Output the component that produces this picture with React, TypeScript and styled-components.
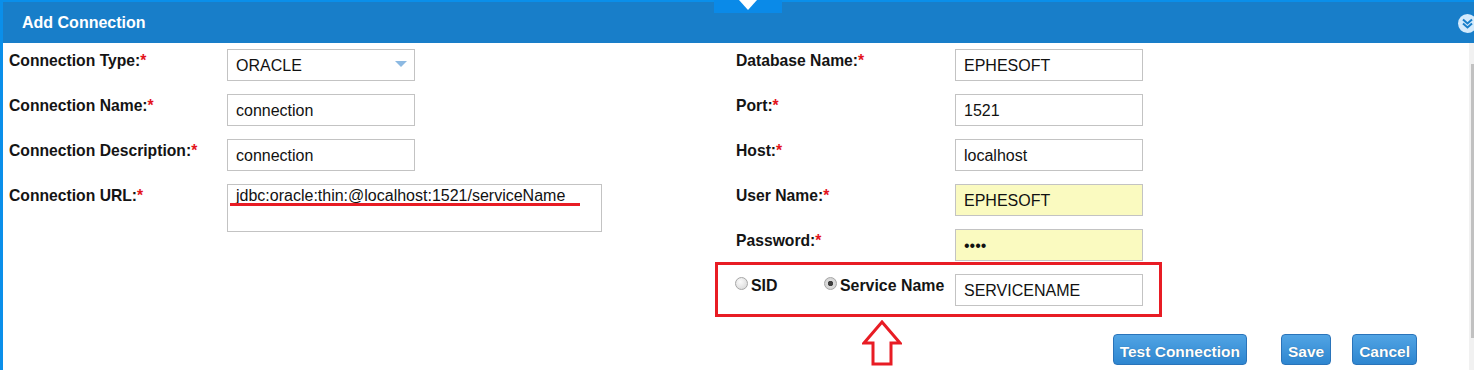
import React from 'react';
import styled, { createGlobalStyle } from 'styled-components';

const GlobalStyle = createGlobalStyle`
  html, body {
    margin: 0;
    padding: 0;
    background: #fff;
  }
  body {
    width: 1474px;
    height: 370px;
    overflow: hidden;
    font-family: "Liberation Sans", Arial, sans-serif;
  }
`;

const Frame = styled.div`
  width: 1474px;
  height: 370px;
  box-sizing: border-box;
  border-left: 3px solid #0a8fea;
  display: flex;
  flex-direction: column;
  overflow: hidden;
`;

const Header = styled.div`
  position: relative;
  flex: none;
  height: 43px;
  box-sizing: border-box;
  border-top: 2px solid #0a8fea;
  background: #187ec9;
  display: flex;
  align-items: center;
  justify-content: space-between;
  padding-left: 19px;
`;

const Title = styled.div`
  color: #fff;
  font-size: 16px;
  font-weight: bold;
`;

const Handle = styled.div`
  position: absolute;
  top: -2px;
  left: 711px;
  width: 68px;
  height: 13px;
  background: #0a8ae8;

  &::after {
    content: '';
    position: absolute;
    left: 25px;
    top: 0;
    border-left: 9.5px solid transparent;
    border-right: 9.5px solid transparent;
    border-top: 10px solid #fff;
  }
`;

const CollapseIcon = styled.svg`
  flex: none;
  margin-right: -3px;
  margin-top: 2px;
`;

const Main = styled.div`
  flex: 1;
  display: flex;
  min-height: 0;
`;

const Content = styled.div`
  flex: 1;
  padding: 6px 0 0 6px;
`;

const Scrollbar = styled.div`
  flex: none;
  width: 5px;
  background: #f1f1f1;
  padding-top: 21px;
  box-sizing: border-box;
`;

const Thumb = styled.div`
  margin-left: 2px;
  width: 3px;
  height: 274px;
  background: #c1c1c1;
`;

const Columns = styled.div`
  display: flex;
  align-items: flex-start;
`;

const Column = styled.div<{ $width: number }>`
  width: ${(p) => p.$width}px;
  display: flex;
  flex-direction: column;
  gap: 13px;
`;

const Row = styled.div`
  display: flex;
  align-items: flex-start;
`;

const Label = styled.label<{ $width: number }>`
  flex: none;
  width: ${(p) => p.$width}px;
  padding-top: 3px;
  font-size: 15.7px;
  line-height: 18px;
  font-weight: bold;
  color: #141414;
`;

const Req = styled.span`
  color: #e3141c;
`;

const TextInput = styled.input<{ $filled?: boolean }>`
  width: 188px;
  height: 32px;
  box-sizing: border-box;
  margin: 0;
  padding: 1px 8px 0;
  border: 1px solid #c3c3c3;
  background: ${(p) => (p.$filled ? '#fafac0' : '#fff')};
  font-family: "Liberation Sans", Arial, sans-serif;
  font-size: 16px;
  color: #111;
  outline: none;
`;

const SelectWrap = styled.div`
  position: relative;
  width: 188px;
  height: 32px;

  &::after {
    content: '';
    position: absolute;
    left: 168px;
    top: 12px;
    border-left: 6px solid transparent;
    border-right: 6px solid transparent;
    border-top: 6px solid #8cb9e2;
    pointer-events: none;
  }
`;

const Select = styled.select`
  appearance: none;
  width: 100%;
  height: 100%;
  box-sizing: border-box;
  margin: 0;
  padding: 1px 8px 0;
  border: 1px solid #c3c3c3;
  border-radius: 0;
  background: #fff;
  font-family: "Liberation Sans", Arial, sans-serif;
  font-size: 16px;
  color: #111;
  outline: none;
`;

const AreaWrap = styled.div`
  position: relative;
`;

const TextArea = styled.textarea`
  display: block;
  width: 375px;
  height: 48px;
  box-sizing: border-box;
  margin: 0;
  padding: 2px 8px;
  border: 1px solid #c3c3c3;
  resize: none;
  overflow: hidden;
  font-family: "Liberation Sans", Arial, sans-serif;
  font-size: 16px;
  line-height: 18px;
  color: #111;
  outline: none;
`;

const Underline = styled.div`
  position: absolute;
  left: 3px;
  top: 19px;
  width: 350px;
  height: 3px;
  background: #e81c24;
`;

const Highlight = styled.div`
  position: relative;
  display: flex;
  align-items: flex-start;
  margin: -12px -19px 0 -21px;
  padding: 9px 16px 8px 18px;
  border: 3px solid #e81c24;
`;

const RadioGroup = styled.div`
  flex: none;
  width: 219px;
  display: grid;
  grid-template-columns: 89px auto;
`;

const Option = styled.label`
  padding-top: 3px;
  font-size: 15.9px;
  line-height: 18px;
  font-weight: bold;
  color: #141414;
  white-space: nowrap;
`;

const Radio = styled.input.attrs({ type: 'radio' })`
  appearance: none;
  width: 13px;
  height: 13px;
  box-sizing: border-box;
  margin: 0 3px 0 -1px;
  border-radius: 50%;
  border: 1px solid #a6a6a6;
  background: radial-gradient(circle at 40% 35%, #fbfbfb, #d4d4d4);
  vertical-align: 1px;

  &:checked {
    background: radial-gradient(circle, #3f3f3f 0 2.4px, #dcdcdc 3px, #cdcdcd 100%);
  }
`;

const Arrow = styled.svg`
  position: absolute;
  left: 144px;
  top: 55px;
`;

const Footer = styled.div`
  display: flex;
  justify-content: flex-end;
  margin-top: 17px;
  padding-right: 52px;
`;

const Button = styled.button<{ $space?: number }>`
  height: 31px;
  box-sizing: border-box;
  margin: 0 0 0 ${(p) => p.$space ?? 0}px;
  padding: 3px 6px 0;
  border: 1px solid #2a74ba;
  border-radius: 4px;
  background: linear-gradient(#51a4e4, #2e86d0);
  color: #fff;
  font-family: "Liberation Sans", Arial, sans-serif;
  font-size: 15.5px;
  font-weight: bold;
  line-height: 27px;
  text-shadow: 0 0 1px rgba(0, 0, 0, 0.35);
  cursor: pointer;
`;

const Field = ({
  label,
  width,
  children,
}: {
  label: string;
  width: number;
  children: React.ReactNode;
}) => (
  <Row>
    <Label $width={width}>
      {label}
      <Req>*</Req>
    </Label>
    {children}
  </Row>
);

export default function App() {
  return (
    <>
      <GlobalStyle />
      <Frame>
        <Header>
          <Title>Add Connection</Title>
          <Handle />
          <CollapseIcon width="19" height="19" viewBox="0 0 19 19">
            <circle cx="9.5" cy="9.5" r="9.5" fill="#d3eafc" />
            <polyline points="5,5.5 9.5,9.5 14,5.5" fill="none" stroke="#187ec9" strokeWidth="2" />
            <polyline points="5,9.5 9.5,13.5 14,9.5" fill="none" stroke="#187ec9" strokeWidth="2" />
          </CollapseIcon>
        </Header>
        <Main>
          <Content>
            <Columns>
              <Column $width={727}>
                <Field label="Connection Type:" width={218}>
                  <SelectWrap>
                    <Select defaultValue="ORACLE">
                      <option>ORACLE</option>
                      <option>MSSQL</option>
                      <option>MYSQL</option>
                    </Select>
                  </SelectWrap>
                </Field>
                <Field label="Connection Name:" width={218}>
                  <TextInput defaultValue="connection" />
                </Field>
                <Field label="Connection Description:" width={218}>
                  <TextInput defaultValue="connection" />
                </Field>
                <Field label="Connection URL:" width={218}>
                  <AreaWrap>
                    <TextArea
                      spellCheck={false}
                      defaultValue="jdbc:oracle:thin:@localhost:1521/serviceName"
                    />
                    <Underline />
                  </AreaWrap>
                </Field>
              </Column>
              <Column $width={407}>
                <Field label="Database Name:" width={219}>
                  <TextInput defaultValue="EPHESOFT" />
                </Field>
                <Field label="Port:" width={219}>
                  <TextInput defaultValue="1521" />
                </Field>
                <Field label="Host:" width={219}>
                  <TextInput defaultValue="localhost" />
                </Field>
                <Field label="User Name:" width={219}>
                  <TextInput $filled defaultValue="EPHESOFT" />
                </Field>
                <Field label="Password:" width={219}>
                  <TextInput $filled type="password" defaultValue="1234" />
                </Field>
                <Highlight>
                  <RadioGroup>
                    <Option>
                      <Radio name="dbid" />
                      SID
                    </Option>
                    <Option>
                      <Radio name="dbid" defaultChecked />
                      Service Name
                    </Option>
                  </RadioGroup>
                  <TextInput defaultValue="SERVICENAME" />
                  <Arrow width="40" height="46" viewBox="0 0 40 46">
                    <polygon
                      points="20,2 38,23 29,23 29,44 11,44 11,23 2,23"
                      fill="#fff"
                      stroke="#e81c24"
                      strokeWidth="3"
                    />
                  </Arrow>
                </Highlight>
              </Column>
            </Columns>
            <Footer>
              <Button>Test Connection</Button>
              <Button $space={34}>Save</Button>
              <Button $space={21}>Cancel</Button>
            </Footer>
          </Content>
          <Scrollbar>
            <Thumb />
          </Scrollbar>
        </Main>
      </Frame>
    </>
  );
}
